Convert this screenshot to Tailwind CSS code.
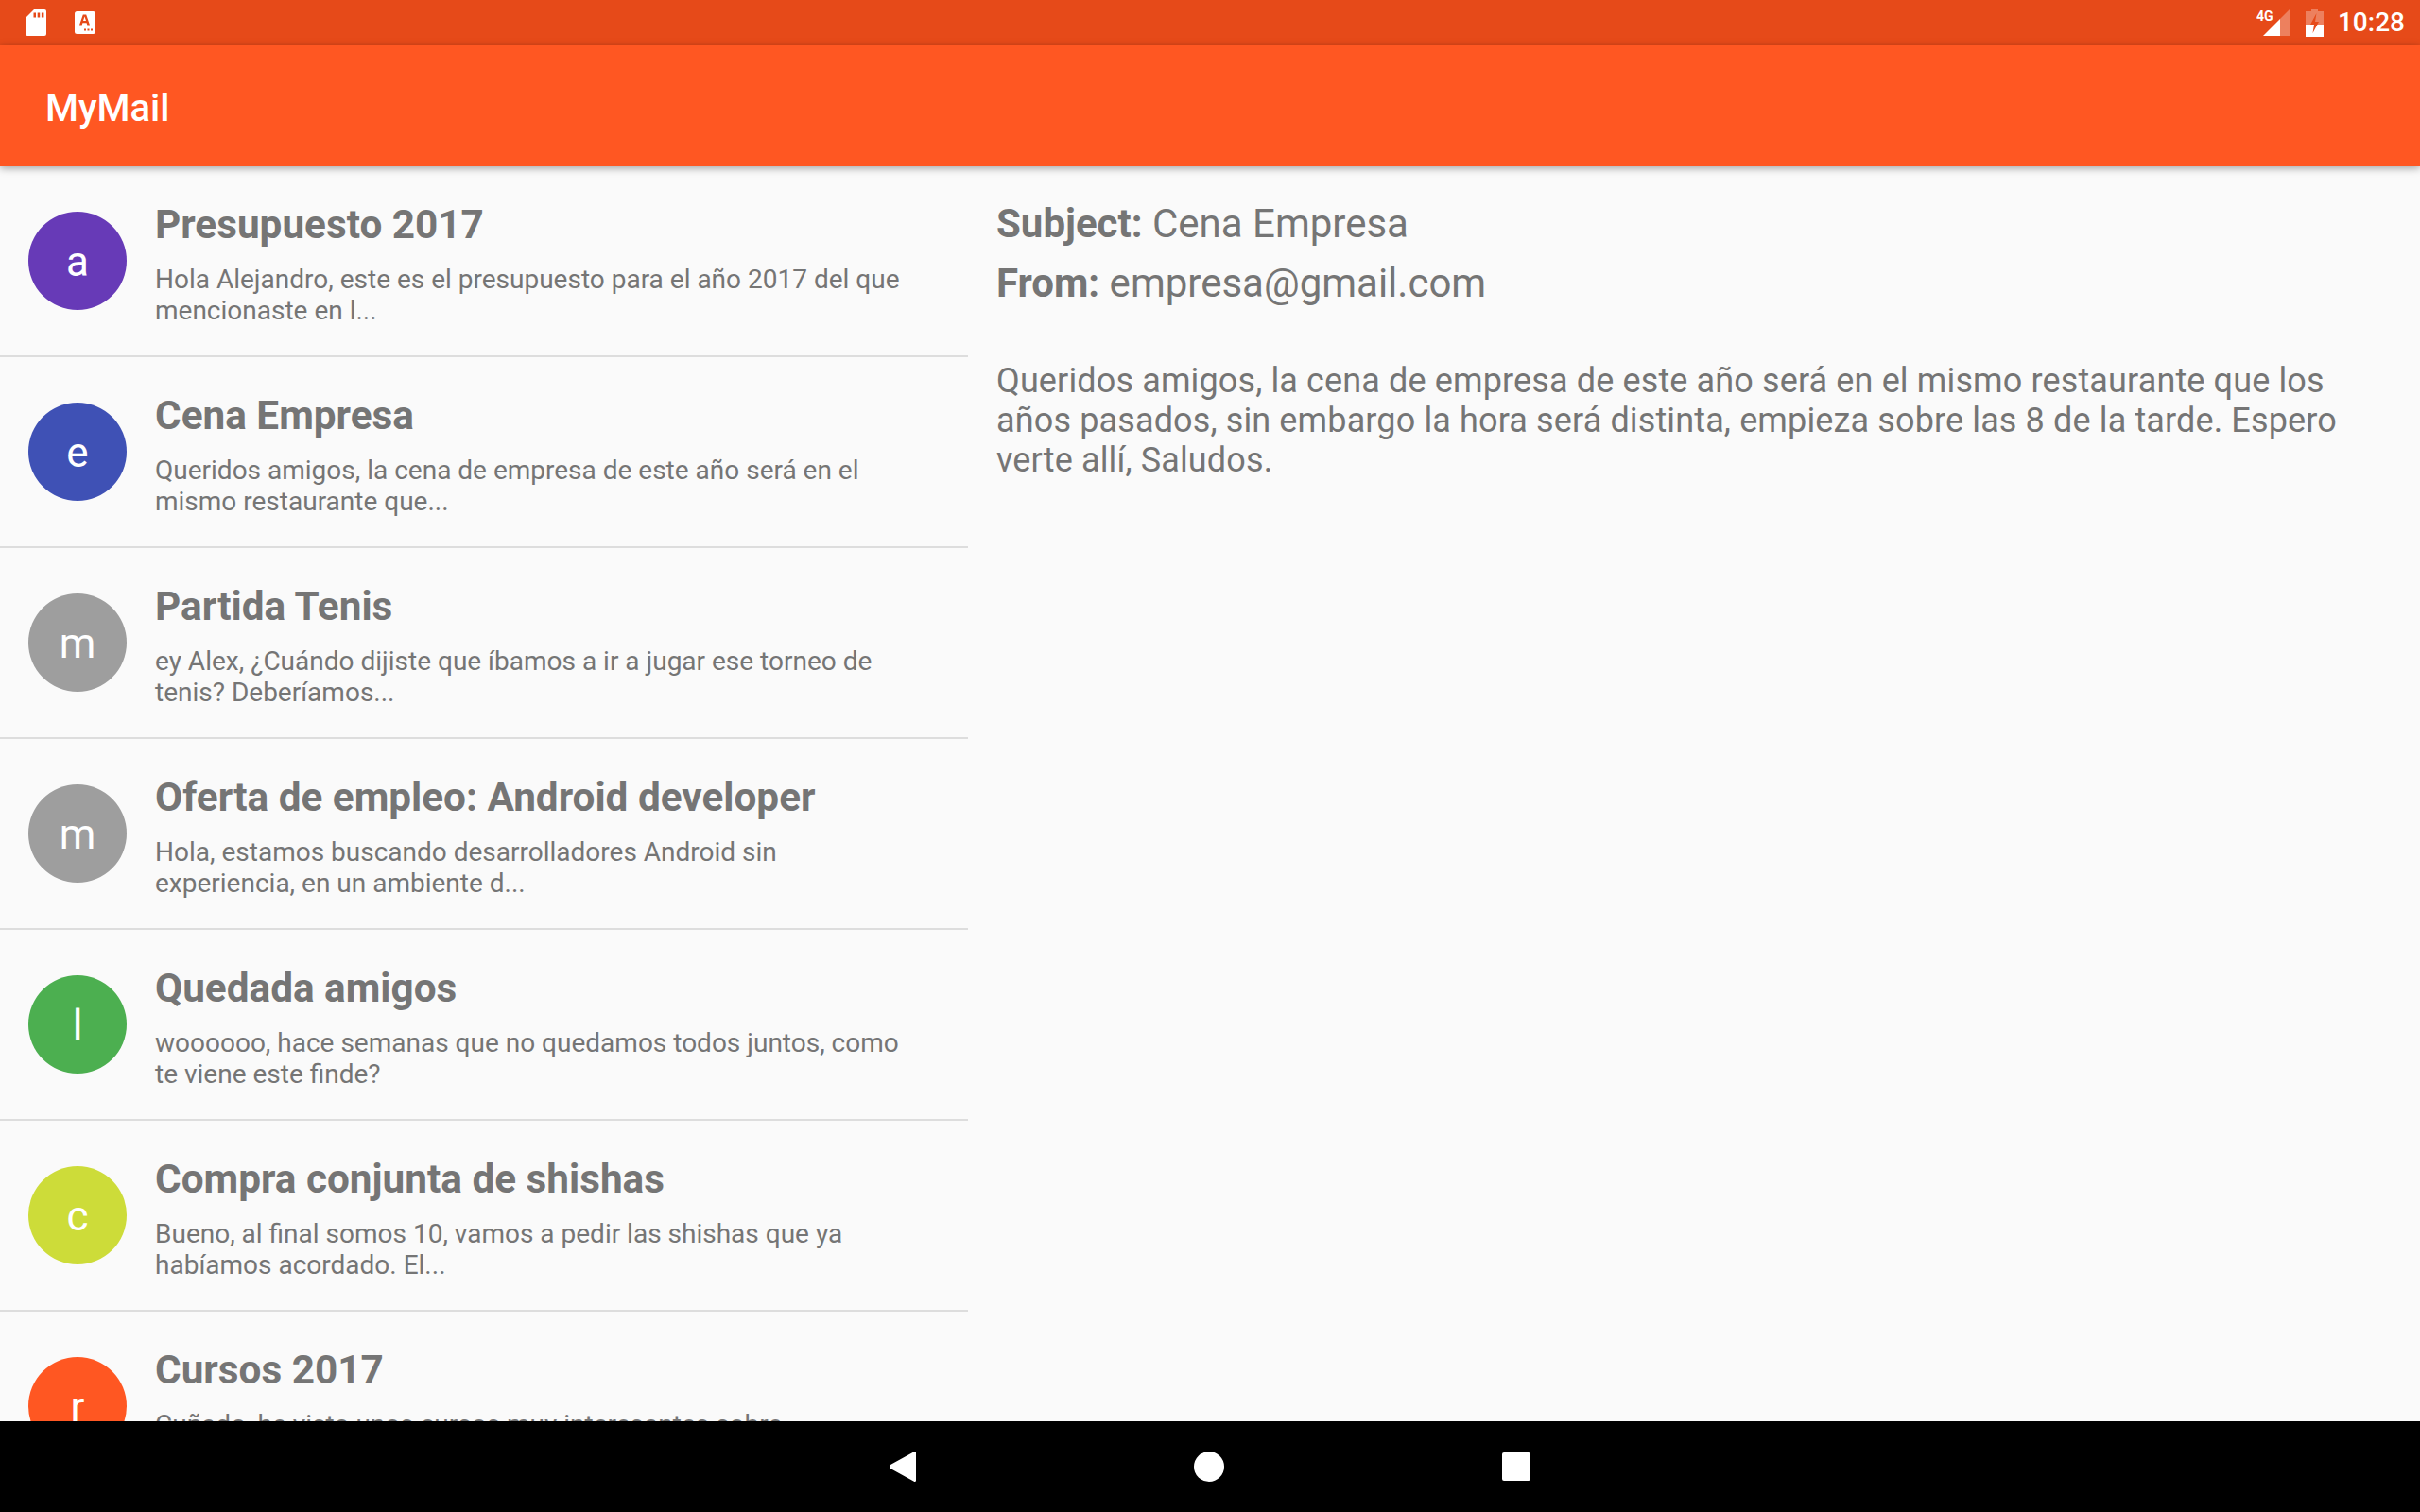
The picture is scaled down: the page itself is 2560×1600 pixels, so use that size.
<!DOCTYPE html>
<html lang="en">
<head>
    <meta charset="UTF-8">
    <title>MyMail</title>
    <script src="https://cdn.jsdelivr.net/npm/@tailwindcss/browser@4"></script>
</head>
<body class="bg-[#fafafa] font-['Roboto',sans-serif] text-[#757575]">
    <div class="flex flex-col h-[1600px] w-[2560px] overflow-hidden">
        <!-- Status bar -->
        <div class="h-12 shrink-0 bg-[#e64a19] flex items-center text-white">
            <svg class="ml-[27px] w-[22px] h-[28px]" viewBox="0 0 22 28"><path fill="#fff" d="M9 0h11a2 2 0 0 1 2 2v24a2 2 0 0 1-2 2H2a2 2 0 0 1-2-2V9z"/><path fill="#e64a19" d="M8.500 3.500H11v5H8.500zM12.700 3.500h2.500v5h-2.500zM16.900 3.500h2.500v5h-2.500z"/></svg>
            <svg class="ml-[30px] w-[22px] h-6" viewBox="0 0 22 24"><rect width="22" height="24" rx="2.500" fill="#fff"/><path fill="#e64a19" d="M8.800 3.500h3.400l3.800 11h-2.700l-.7-2.300H8.400l-.7 2.300H5zM9 10h3l-1.500-4.400zM10 18.500h2v2h-2zM13.500 18.500h2v2h-2zM17 18.500h2v2h-2z"/></svg>
            <div class="flex-1"></div>
            <div class="relative w-[28px] h-[28px] mr-[17px]">
                <svg class="absolute left-0 top-0 w-[28px] h-[28px]" viewBox="0 0 28 28"><path fill="#fff" fill-opacity=".3" d="M28 0v28H18V10z"/><path fill="#fff" d="M18 10v18H0z"/></svg>
                <span class="absolute left-[-7px] top-0 text-[14px] leading-[14px] font-bold">4G</span>
            </div>
            <svg class="w-[19px] h-[30px] mr-[15px]" viewBox="0 0 19 30"><path fill="#fff" fill-opacity=".3" d="M6 0h7v3h6v27H0V3h6z"/><path fill="#fff" d="M0 17h19v13H0z"/><path fill="#e64a19" d="M11.500 5 5 17h4l-1.500 9L14 14h-4z"/></svg>
            <span class="text-[28px] leading-none font-medium mr-[16px]">10:28</span>
        </div>

        <!-- Toolbar -->
        <header class="h-32 shrink-0 bg-[#ff5722] flex items-center pl-12 pt-1.5 shadow-[0_2px_8px_rgba(0,0,0,0.35)] relative z-10">
            <h1 class="text-[40px] font-medium text-white">MyMail</h1>
        </header>

        <main class="flex-1 min-h-0 flex">
            <!-- Mail list -->
            <section class="w-[1024px] shrink-0 overflow-hidden">
                <div class="h-[202px] border-b-2 border-[#dddddd] flex items-center">
                    <div class="ml-[30px] pt-[2px] w-[104px] h-[104px] rounded-full bg-[#673ab7] text-white text-[44px] flex items-center justify-center">a</div>
                    <div class="ml-[30px] w-[800px] self-start pt-[36px]">
                        <h2 class="text-[42.3px] leading-[52px] font-bold">Presupuesto 2017</h2>
                        <p class="mt-[15px] text-[28px] leading-[33px]">Hola Alejandro, este es el presupuesto para el año 2017 del que mencionaste en l...</p>
                    </div>
                </div>
                <div class="h-[202px] border-b-2 border-[#dddddd] flex items-center">
                    <div class="ml-[30px] pt-[2px] w-[104px] h-[104px] rounded-full bg-[#3f51b5] text-white text-[44px] flex items-center justify-center">e</div>
                    <div class="ml-[30px] w-[800px] self-start pt-[36px]">
                        <h2 class="text-[42.3px] leading-[52px] font-bold">Cena Empresa</h2>
                        <p class="mt-[15px] text-[28px] leading-[33px]">Queridos amigos, la cena de empresa de este año será en el mismo restaurante que...</p>
                    </div>
                </div>
                <div class="h-[202px] border-b-2 border-[#dddddd] flex items-center">
                    <div class="ml-[30px] pt-[2px] w-[104px] h-[104px] rounded-full bg-[#9e9e9e] text-white text-[44px] flex items-center justify-center">m</div>
                    <div class="ml-[30px] w-[800px] self-start pt-[36px]">
                        <h2 class="text-[42.3px] leading-[52px] font-bold">Partida Tenis</h2>
                        <p class="mt-[15px] text-[28px] leading-[33px]">ey Alex, ¿Cuándo dijiste que íbamos a ir a jugar ese torneo de tenis? Deberíamos...</p>
                    </div>
                </div>
                <div class="h-[202px] border-b-2 border-[#dddddd] flex items-center">
                    <div class="ml-[30px] pt-[2px] w-[104px] h-[104px] rounded-full bg-[#9e9e9e] text-white text-[44px] flex items-center justify-center">m</div>
                    <div class="ml-[30px] w-[800px] self-start pt-[36px]">
                        <h2 class="text-[42.3px] leading-[52px] font-bold">Oferta de empleo: Android developer</h2>
                        <p class="mt-[15px] text-[28px] leading-[33px]">Hola, estamos buscando desarrolladores Android sin experiencia, en un ambiente d...</p>
                    </div>
                </div>
                <div class="h-[202px] border-b-2 border-[#dddddd] flex items-center">
                    <div class="ml-[30px] pt-[2px] w-[104px] h-[104px] rounded-full bg-[#4caf50] text-white text-[44px] flex items-center justify-center">l</div>
                    <div class="ml-[30px] w-[800px] self-start pt-[36px]">
                        <h2 class="text-[42.3px] leading-[52px] font-bold">Quedada amigos</h2>
                        <p class="mt-[15px] text-[28px] leading-[33px]">woooooo, hace semanas que no quedamos todos juntos, como te viene este finde?</p>
                    </div>
                </div>
                <div class="h-[202px] border-b-2 border-[#dddddd] flex items-center">
                    <div class="ml-[30px] pt-[2px] w-[104px] h-[104px] rounded-full bg-[#cddc39] text-white text-[44px] flex items-center justify-center">c</div>
                    <div class="ml-[30px] w-[800px] self-start pt-[36px]">
                        <h2 class="text-[42.3px] leading-[52px] font-bold">Compra conjunta de shishas</h2>
                        <p class="mt-[15px] text-[28px] leading-[33px]">Bueno, al final somos 10, vamos a pedir las shishas que ya habíamos acordado. El...</p>
                    </div>
                </div>
                <div class="h-[202px] border-b-2 border-[#dddddd] flex items-center">
                    <div class="ml-[30px] pt-[2px] w-[104px] h-[104px] rounded-full bg-[#ff5722] text-white text-[44px] flex items-center justify-center">r</div>
                    <div class="ml-[30px] w-[800px] self-start pt-[36px]">
                        <h2 class="text-[42.3px] leading-[52px] font-bold">Cursos 2017</h2>
                        <p class="mt-[15px] text-[28px] leading-[33px]">Cuñado, he visto unos cursos muy interesantes sobre programación, te los paso...</p>
                    </div>
                </div>
            </section>

            <!-- Mail detail -->
            <section class="flex-1 pl-[30px] pr-[48px] pt-[29px]">
                <p class="text-[42px] leading-[63px]"><b class="font-bold">Subject:</b> Cena Empresa</p>
                <p class="text-[42px] leading-[63px]"><b class="font-bold">From:</b> empresa@gmail.com</p>
                <p class="mt-[51px] text-[36px] leading-[42px] tracking-[0.13px]">Queridos amigos, la cena de empresa de este año será en el mismo restaurante que los años pasados, sin embargo la hora será distinta, empieza sobre las 8 de la tarde. Espero verte allí, Saludos.</p>
            </section>
        </main>

        <!-- Navigation bar -->
        <nav class="h-24 shrink-0 bg-black flex items-center justify-center gap-[294px] relative z-10">
            <svg class="w-[28px] h-[32px]" viewBox="0 0 28 32"><path fill="#fff" d="M25.500.6c1.200-1 2.500-.5 2.500 1v28.800c0 1.500-1.300 2-2.500 1L1 18c-1.300-1-1.300-3 0-4z"/></svg>
            <div class="w-[32px] h-[32px] rounded-full bg-white"></div>
            <div class="w-[30px] h-[30px] rounded-[2px] bg-white"></div>
        </nav>
    </div>
</body>
</html>
